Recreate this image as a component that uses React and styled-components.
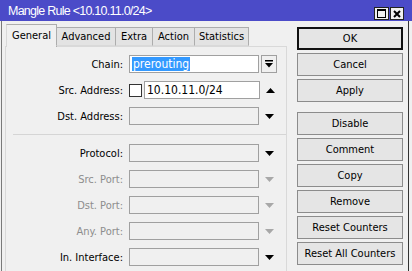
import React from "react";
import styled, { createGlobalStyle } from "styled-components";

const GlobalStyle = createGlobalStyle`
  html, body {
    margin: 0;
    padding: 0;
    background: #f0f0f0;
  }
  body {
    font-family: "DejaVu Sans Condensed", "Liberation Sans", sans-serif;
    font-size: 11px;
    color: #000;
  }
`;

const Window = styled.div`
  width: 412px;
  height: 271px;
  overflow: hidden;
  display: flex;
  flex-direction: column;
  background: #f0f0f0;
`;

const TitleBar = styled.div`
  height: 21px;
  flex: none;
  display: flex;
  align-items: flex-start;
  padding: 0 8px;
  background: #4b4bc8;
  color: #fff;
`;

const Title = styled.div`
  flex: 1;
  padding-top: 4px;
  line-height: 14px;
  font-family: "Liberation Sans", Arial, sans-serif;
  font-size: 12.5px;
  letter-spacing: -0.75px;
`;

const WinButtons = styled.div`
  display: flex;
  gap: 1px;
  margin-top: 7px;
`;

const WinButton = styled.div`
  width: ${(p) => p.w}px;
  height: 13px;
  box-sizing: border-box;
  border: 1px solid #222;
  background: #f0f0f0;
  display: flex;
  align-items: center;
  justify-content: center;
`;

const Body = styled.div`
  flex: 1;
  display: flex;
  gap: 10px;
  margin: 0 3px 0 1px;
  padding-left: 3px;
  border-left: 1px solid #7a7a7a;
  border-right: 1px solid #333;
`;

const LeftPane = styled.div`
  width: 282px;
  display: flex;
  flex-direction: column;
  padding-top: 3px;
`;

const TabRow = styled.div`
  display: flex;
  align-items: flex-end;
  height: 22px;
  padding-left: 1px;
  position: relative;
  z-index: 1;
`;

const Tab = styled.div`
  width: ${(p) => p.w}px;
  height: ${(p) => (p.active ? 23 : 19)}px;
  box-sizing: border-box;
  margin-bottom: ${(p) => (p.active ? -1 : 0)}px;
  border: 1px solid #adadad;
  border-left-color: ${(p) => (p.active ? "#d9d9d9" : "#adadad")};
  border-bottom: ${(p) => (p.active ? "none" : "1px solid #d9d9d9")};
  margin-left: ${(p) => (p.first ? 0 : -1)}px;
  background: ${(p) => (p.active ? "#f0f0f0" : "#e3e3e3")};
  display: flex;
  align-items: center;
  justify-content: center;
  padding-bottom: ${(p) => (p.active ? 2 : 0)}px;
`;

const Panel = styled.div`
  flex: 1;
  display: flex;
  flex-direction: column;
  gap: 8px;
  padding: 8px 0 0 0;
  background: #f0f0f0;
  border: 1px solid #d9d9d9;
  border-bottom: none;
`;

const Row = styled.div`
  display: flex;
  align-items: center;
  height: 18px;
`;

const Label = styled.div`
  width: 117px;
  margin-right: 6px;
  text-align: right;
  color: ${(p) => (p.disabled ? "#8d8d8d" : "#000")};
`;

const Field = styled.div`
  width: ${(p) => p.w || 130}px;
  height: 18px;
  box-sizing: border-box;
  border: 1px solid #a0a0a0;
  background: ${(p) => (p.white ? "#fff" : "#f0f0f0")};
  display: flex;
  align-items: center;
  padding-left: 2px;
  font-size: 12px;
`;

const Selected = styled.span`
  background: #3399ff;
  color: #fff;
  padding: 0 1px;
  line-height: 14px;
`;

const Check = styled.div`
  width: 13px;
  height: 13px;
  box-sizing: border-box;
  border: 1px solid #333;
  background: #fff;
  margin-right: 2px;
`;

const ArrowSlot = styled.div`
  width: 16px;
  height: 18px;
  margin-left: 2px;
  display: flex;
  align-items: center;
  justify-content: center;
`;

const DropButton = styled(ArrowSlot)`
  box-sizing: border-box;
  border: 1px solid #a0a0a0;
  background: #f0f0f0;
`;

const Separator = styled.div`
  height: 1px;
  margin: 1px 0 1px 7px;
  background: #d5d5d5;
`;

const ButtonColumn = styled.div`
  width: 106px;
  display: flex;
  flex-direction: column;
  gap: 3px;
  padding-top: 6px;
`;

const Button = styled.div`
  height: 23px;
  box-sizing: border-box;
  border: ${(p) => (p.primary ? "2px solid #111" : "1px solid #8c8c8c")};
  background: #e5e5e5;
  display: flex;
  align-items: center;
  justify-content: center;
  margin-top: ${(p) => (p.spaced ? 7 : 0)}px;
`;

const Arrow = ({ up, disabled }) => (
  <svg width="9" height="5" viewBox="0 0 9 5">
    <path
      d={up ? "M0 5 L9 5 L4.5 0 Z" : "M0 0 L9 0 L4.5 5 Z"}
      fill={disabled ? "#a8a8a8" : "#000"}
    />
  </svg>
);

const tabs = [
  { name: "General", w: 51, active: true },
  { name: "Advanced", w: 60 },
  { name: "Extra", w: 38 },
  { name: "Action", w: 43 },
  { name: "Statistics", w: 55 },
];

const lower = [
  { label: "Protocol:" },
  { label: "Src. Port:", disabled: true },
  { label: "Dst. Port:", disabled: true },
  { label: "Any. Port:", disabled: true },
  { label: "In. Interface:" },
];

const buttons = [
  { text: "OK", primary: true },
  { text: "Cancel" },
  { text: "Apply" },
  { text: "Disable", spaced: true },
  { text: "Comment" },
  { text: "Copy" },
  { text: "Remove" },
  { text: "Reset Counters" },
  { text: "Reset All Counters" },
];

export default function App() {
  return (
    <>
      <GlobalStyle />
      <Window>
        <TitleBar>
          <Title>Mangle Rule &lt;10.10.11.0/24&gt;</Title>
          <WinButtons>
            <WinButton w={15}>
              <svg width="9" height="9" viewBox="0 0 9 9">
                <rect x="0.5" y="0.5" width="8" height="8" fill="none" stroke="#000" />
                <line x1="0" y1="1.5" x2="9" y2="1.5" stroke="#000" />
              </svg>
            </WinButton>
            <WinButton w={14}>
              <svg width="8" height="8" viewBox="0 0 8 8">
                <path d="M1 1 L7 7 M7 1 L1 7" stroke="#000" strokeWidth="2" />
              </svg>
            </WinButton>
          </WinButtons>
        </TitleBar>
        <Body>
          <LeftPane>
            <TabRow>
              {tabs.map((t, i) => (
                <Tab key={t.name} w={t.w} active={t.active} first={i === 0}>
                  {t.name}
                </Tab>
              ))}
            </TabRow>
            <Panel>
              <Row>
                <Label>Chain:</Label>
                <Field white>
                  <Selected>prerouting</Selected>
                </Field>
                <DropButton>
                  <svg width="8" height="8" viewBox="0 0 8 8">
                    <rect x="0" y="0" width="8" height="1.5" fill="#000" />
                    <path d="M0 3 L8 3 L4 7.5 Z" fill="#000" />
                  </svg>
                </DropButton>
              </Row>
              <Row>
                <Label>Src. Address:</Label>
                <Check />
                <Field white w={116}>10.10.11.0/24</Field>
                <ArrowSlot>
                  <Arrow up />
                </ArrowSlot>
              </Row>
              <Row>
                <Label>Dst. Address:</Label>
                <Field />
                <ArrowSlot>
                  <Arrow />
                </ArrowSlot>
              </Row>
              <Separator />
              {lower.map((r) => (
                <Row key={r.label}>
                  <Label disabled={r.disabled}>{r.label}</Label>
                  <Field />
                  <ArrowSlot>
                    <Arrow disabled={r.disabled} />
                  </ArrowSlot>
                </Row>
              ))}
            </Panel>
          </LeftPane>
          <ButtonColumn>
            {buttons.map((b) => (
              <Button key={b.text} primary={b.primary} spaced={b.spaced}>
                {b.text}
              </Button>
            ))}
          </ButtonColumn>
        </Body>
      </Window>
    </>
  );
}
